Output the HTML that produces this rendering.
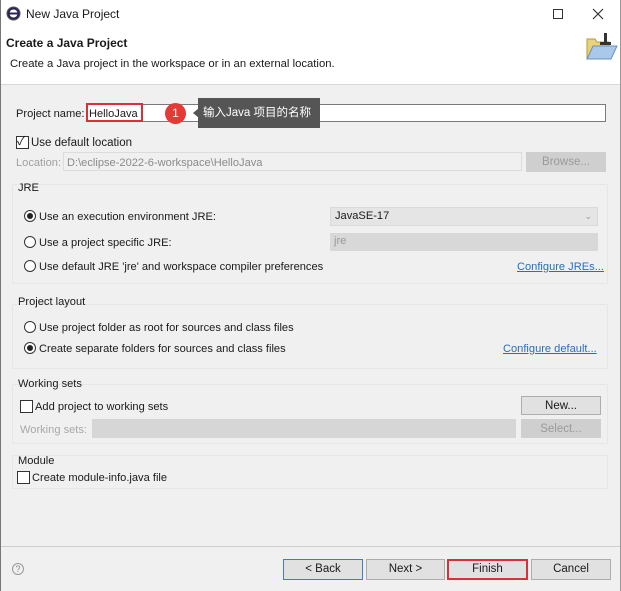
<!DOCTYPE html>
<html><head><meta charset="utf-8"><style>
*{margin:0;padding:0;box-sizing:border-box}
body{width:621px;height:591px;background:#f0f0f0;font-family:"Liberation Sans","Noto Sans CJK SC",sans-serif;font-size:11.1px;color:#1a1a1a;position:relative;overflow:hidden}
.a{position:absolute;white-space:nowrap}
.t{position:absolute;white-space:nowrap;line-height:14px}
.btn{position:absolute;background:#e1e1e1;border:1px solid #adadad;text-align:center;line-height:18px;font-size:11.5px}
.dis{color:#9a9a9a;background:#cfcfcf;border-color:#cfcfcf}
.rad{position:absolute;width:12px;height:12px;border:1px solid #333;border-radius:50%;background:#fff}
.rad.on::after{content:"";position:absolute;left:2px;top:2px;width:6px;height:6px;border-radius:50%;background:#222}
.cb{position:absolute;width:13px;height:13px;border:1px solid #333;background:#fff}
.grp{position:absolute;border:1px solid #e6e6e6;border-radius:2px}
.link{color:#2a6ebb;text-decoration:underline}
</style></head><body>
<div class="a" style="left:0;top:0;width:621px;height:85px;background:#fff;border-bottom:1px solid #d8d8d8"></div>
<div class="a" style="left:0;top:0;width:1px;height:591px;background:#777"></div>
<div class="a" style="left:620px;top:0;width:1px;height:591px;background:#999"></div>
<svg class="a" style="left:6px;top:6px" width="15" height="15"><circle cx="7.5" cy="7.5" r="6.5" fill="#2c2255" stroke="#555" /><circle cx="7.5" cy="7.5" r="4" fill="#fff"/><rect x="3" y="6.5" width="9" height="2" fill="#2c2255"/></svg>
<div class="t" style="left:26px;top:7px;font-size:12px">New Java Project</div>
<div class="a" style="left:553px;top:9px;width:10px;height:10px;border:1px solid #333"></div>
<svg class="a" style="left:592px;top:8px" width="12" height="12"><path d="M1 1L11 11M11 1L1 11" stroke="#333" stroke-width="1.2"/></svg>
<div class="t" style="left:6px;top:36px;font-weight:bold;font-size:12px">Create a Java Project</div>
<div class="t" style="left:10px;top:57px;font-size:11.3px">Create a Java project in the workspace or in an external location.</div>
<svg class="a" style="left:583px;top:31px" width="36" height="32"><path d="M4 8h8l2 3h12v16H4z" fill="#e8d27a" stroke="#b89a3a"/><path d="M4 28l6-13h24l-6 13z" fill="#a9c8ea" stroke="#6a8fbf"/><rect x="21" y="2" width="3" height="11" fill="#333"/><rect x="17" y="11" width="11" height="3" fill="#333"/></svg>

<div class="t" style="left:16px;top:107px">Project name:</div>
<div class="a" style="left:86px;top:104px;width:520px;height:18px;background:#fff;border:1px solid #7a7a7a"></div>
<div class="a" style="left:86px;top:103px;width:57px;height:19px;border:2px solid #d9303a"></div>
<div class="t" style="left:89px;top:107px">HelloJava</div>
<div class="a" style="left:165px;top:103px;width:21px;height:21px;border-radius:50%;background:#e53935;color:#fff;text-align:center;line-height:21px;font-size:12px">1</div>
<div class="a" style="left:193px;top:108px;width:0;height:0;border-top:5px solid transparent;border-bottom:5px solid transparent;border-right:6px solid #555"></div>
<div class="a" style="left:198px;top:98px;width:122px;height:30px;background:#555;color:#fff;line-height:30px;padding-left:5px;font-size:11.5px">输入Java 项目的名称</div>

<div class="cb" style="left:16px;top:136px"></div>
<div class="t" style="left:17px;top:134px;font-size:12px">✓</div>
<div class="t" style="left:31px;top:136px;font-size:11.5px">Use default location</div>
<div class="t" style="left:16px;top:156px;color:#a0a0a0">Location:</div>
<div class="a" style="left:63px;top:152px;width:459px;height:19px;border:1px solid #dcdcdc;background:#f0f0f0"></div>
<div class="t" style="left:67px;top:156px;color:#8a8a8a">D:\eclipse-2022-6-workspace\HelloJava</div>
<div class="btn dis" style="left:526px;top:152px;width:80px;height:20px">Browse...</div>

<div class="grp" style="left:12px;top:184px;width:596px;height:100px"></div>
<div class="t" style="left:18px;top:181px">JRE</div>
<div class="rad on" style="left:24px;top:210px"></div>
<div class="t" style="left:39px;top:210px">Use an execution environment JRE:</div>
<div class="a" style="left:330px;top:207px;width:268px;height:19px;background:#e5e5e5;border:1px solid #dadada;line-height:17px;padding-left:4px">JavaSE-17<span style="position:absolute;right:5px;color:#999;font-size:9px">⌄</span></div>
<div class="rad" style="left:24px;top:236px"></div>
<div class="t" style="left:39px;top:236px">Use a project specific JRE:</div>
<div class="a" style="left:330px;top:233px;width:268px;height:18px;background:#d8d8d8;line-height:17px;padding-left:4px;color:#999">jre</div>
<div class="rad" style="left:24px;top:260px"></div>
<div class="t" style="left:39px;top:260px">Use default JRE 'jre' and workspace compiler preferences</div>
<div class="t link" style="left:517px;top:260px">Configure JREs...</div>

<div class="grp" style="left:12px;top:304px;width:596px;height:65px"></div>
<div class="t" style="left:18px;top:295px">Project layout</div>
<div class="rad" style="left:24px;top:321px"></div>
<div class="t" style="left:39px;top:321px">Use project folder as root for sources and class files</div>
<div class="rad on" style="left:24px;top:342px"></div>
<div class="t" style="left:39px;top:342px">Create separate folders for sources and class files</div>
<div class="t link" style="left:503px;top:342px">Configure default...</div>

<div class="grp" style="left:12px;top:384px;width:596px;height:60px"></div>
<div class="t" style="left:18px;top:377px">Working sets</div>
<div class="cb" style="left:20px;top:400px"></div>
<div class="t" style="left:35px;top:400px">Add project to working sets</div>
<div class="btn" style="left:521px;top:396px;width:80px;height:19px">New...</div>
<div class="t" style="left:20px;top:423px;color:#a8a8a8">Working sets:</div>
<div class="a" style="left:92px;top:419px;width:424px;height:19px;background:#d6d6d6"></div>
<div class="btn dis" style="left:521px;top:419px;width:80px;height:19px">Select...</div>

<div class="grp" style="left:12px;top:455px;width:596px;height:34px"></div>
<div class="t" style="left:18px;top:454px">Module</div>
<div class="cb" style="left:17px;top:471px"></div>
<div class="t" style="left:32px;top:471px">Create module-info.java file</div>

<div class="a" style="left:1px;top:546px;width:619px;height:1px;background:#cfcfcf"></div>
<div class="a" style="left:12px;top:563px;width:12px;height:12px;border:1px solid #999;border-radius:50%;font-size:9px;text-align:center;line-height:10px;color:#888">?</div>
<div class="btn" style="left:283px;top:559px;width:80px;height:21px;border-color:#3c7fc4;line-height:19px">&lt; Back</div>
<div class="btn" style="left:366px;top:559px;width:79px;height:21px;line-height:19px">Next &gt;</div>
<div class="btn" style="left:447px;top:559px;width:81px;height:21px;border:2px solid #d9303a;line-height:17px">Finish</div>
<div class="btn" style="left:531px;top:559px;width:80px;height:21px;line-height:19px">Cancel</div>
</body></html>
